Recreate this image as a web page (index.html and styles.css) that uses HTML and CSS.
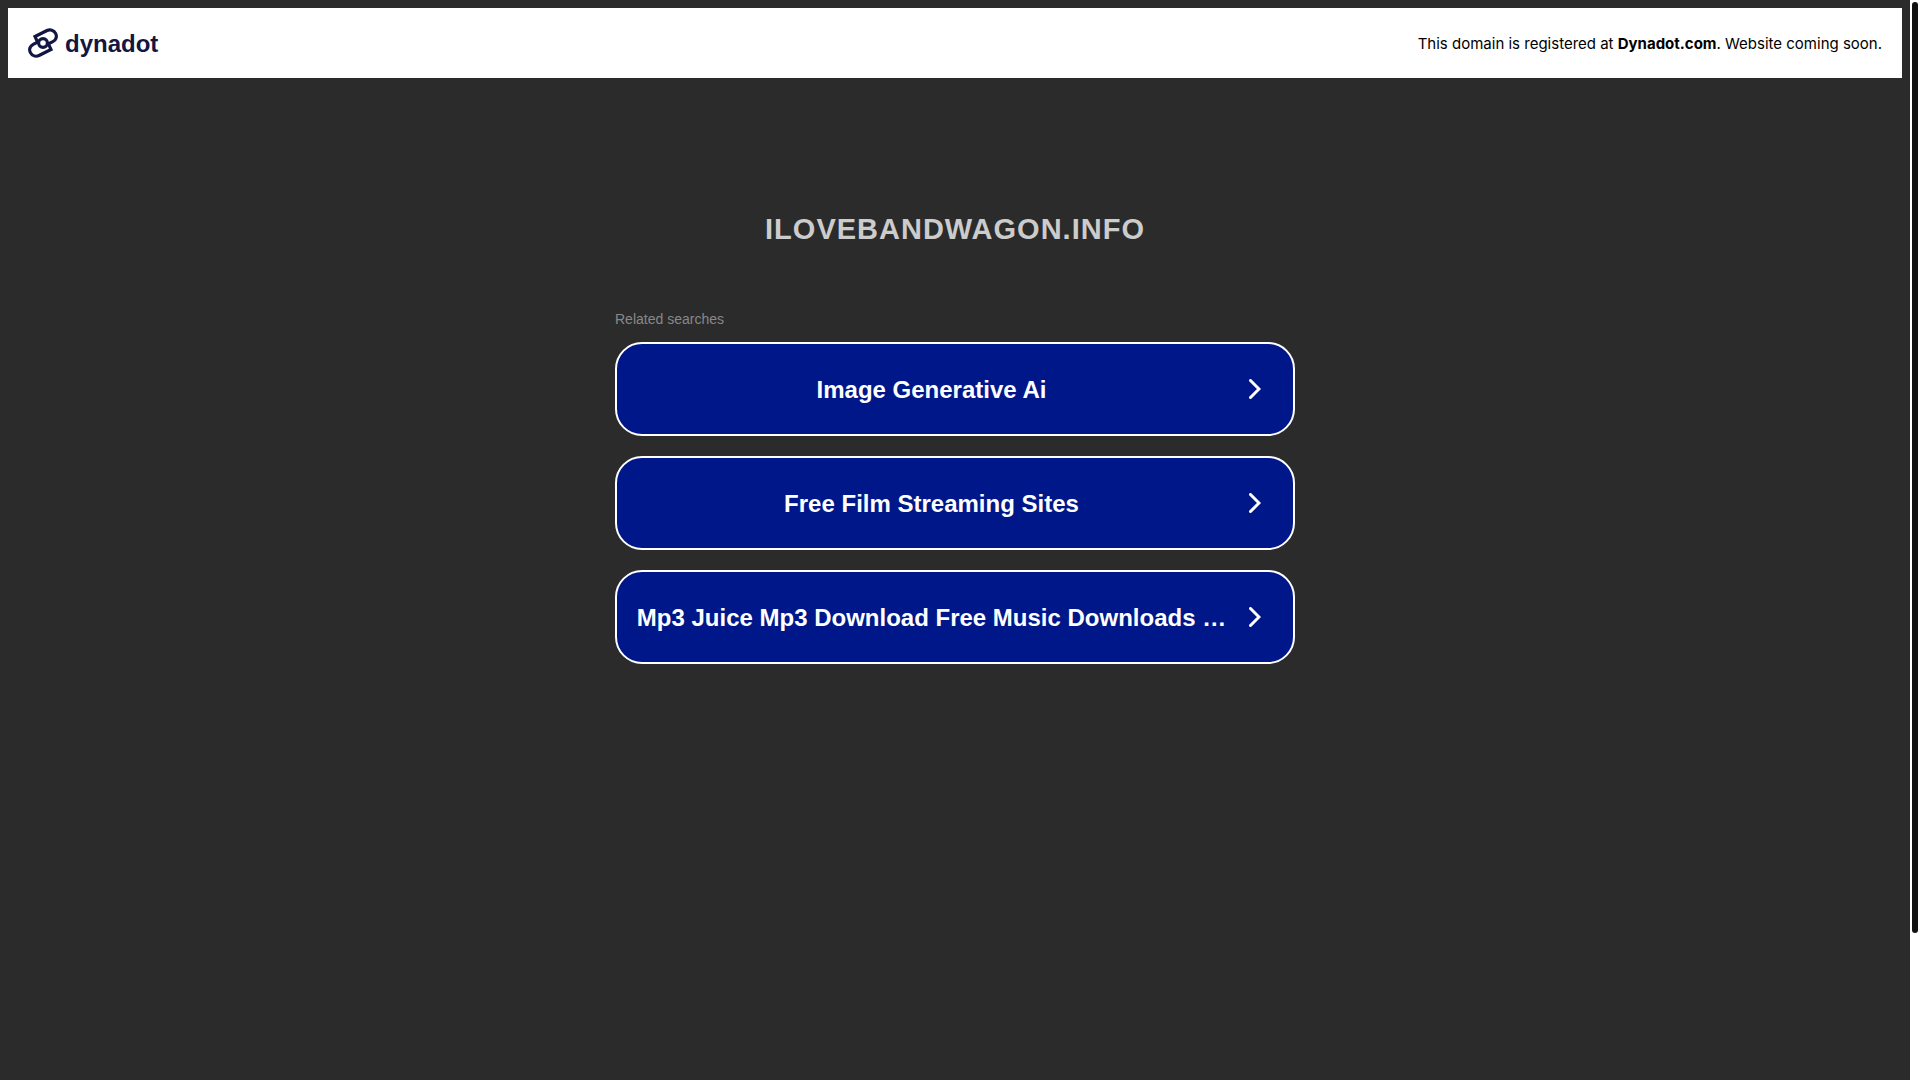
FILE: index.html
```
<!DOCTYPE html>
<html lang="en">
<head>
  <meta charset="UTF-8" />
  <meta name="viewport" content="width=device-width, initial-scale=1.0"/>
  <title>ilovebandwagon.info</title>
  <link rel="stylesheet" href="styles.css">
</head>
<body>

  <div class="page">
    <header class="banner">
      <a class="logo" href="#">
        <svg class="logo-icon" viewBox="0 0 30 30" fill="none" stroke="#131542" stroke-width="3.2" aria-hidden="true">
          <path d="M9.6 14.2 7 8.6 18.5 2.8C22.3 .9 26 2.2 27.6 5.4C29.2 8.6 28 12 24.8 13.7L18.6 16.8"/>
          <path d="M20.4 15.8 23 21.4 11.5 27.2C7.7 29.1 4 27.8 2.4 24.6C.8 21.4 2 18 5.2 16.3L11.4 13.2"/>
          <circle cx="15" cy="15" r="4.4"/>
        </svg>
        <span class="logo-text">dynadot</span>
      </a>
      <p class="notice">This domain is registered at <a href="#">Dynadot.com</a>. Website coming soon.</p>
    </header>

    <main class="content">
      <h1 class="domain">ilovebandwagon.info</h1>
      <p class="label">Related searches</p>
      <nav class="searches">
        <a class="search" href="#">
          <span class="search-text">Image Generative Ai</span>
          <svg class="arrow" viewBox="0 0 12 20" aria-hidden="true"><path d="M1.5 1.5 10 10 1.5 18.5"/></svg>
        </a>
        <a class="search" href="#">
          <span class="search-text">Free Film Streaming Sites</span>
          <svg class="arrow" viewBox="0 0 12 20" aria-hidden="true"><path d="M1.5 1.5 10 10 1.5 18.5"/></svg>
        </a>
        <a class="search" href="#">
          <span class="search-text">Mp3 Juice Mp3 Download Free Music Downloads …</span>
          <svg class="arrow" viewBox="0 0 12 20" aria-hidden="true"><path d="M1.5 1.5 10 10 1.5 18.5"/></svg>
        </a>
      </nav>
    </main>
  </div>

  <div class="scrollbar" aria-hidden="true">
    <div class="thumb"></div>
  </div>

</body>
</html>
```
FILE: styles.css
```
* {
  box-sizing: border-box;
}

body {
  margin: 0;
  display: flex;
  min-height: 100vh;
  background: #2b2b2b;
  font-family: "Liberation Sans", Arial, sans-serif;
}

a {
  color: inherit;
  text-decoration: none;
}

.page {
  flex: 1;
  min-width: 0;
  padding: 8px;
}

.banner {
  display: flex;
  align-items: center;
  justify-content: space-between;
  height: 70px;
  padding: 0 20px;
  background: #fff;
}

.logo {
  display: flex;
  align-items: center;
  gap: 7px;
  color: #131542;
}

.logo-icon {
  width: 30px;
  height: 30px;
}

.logo-text {
  padding-top: 2px;
  font-size: 24px;
  font-weight: bold;
  line-height: 30px;
}

.notice {
  margin: 0;
  font-family: Inter, "Liberation Sans", sans-serif;
  font-size: 15px;
  color: #000;
}

.notice a {
  font-weight: bold;
}

.content {
  width: 100%;
  max-width: 680px;
  margin: 0 auto;
  padding-top: 134px;
}

.domain {
  margin: 0;
  font-size: 29px;
  line-height: 34px;
  letter-spacing: 1px;
  text-align: center;
  text-transform: uppercase;
  color: #ccc;
}

.label {
  margin: 64px 0 14px;
  font-size: 14px;
  line-height: 18px;
  color: #888;
}

.searches {
  display: flex;
  flex-direction: column;
  gap: 20px;
}

.search {
  display: flex;
  align-items: center;
  height: 94px;
  padding: 0 32px 0 15px;
  border: 2px solid #fff;
  border-radius: 27px;
  background: #001789;
  color: #fff;
}

.search-text {
  flex: 1;
  min-width: 0;
  margin-right: 18px;
  padding-top: 2px;
  overflow: hidden;
  font-size: 24px;
  font-weight: bold;
  line-height: 32px;
  text-align: center;
  text-overflow: ellipsis;
  white-space: nowrap;
}

.arrow {
  flex: none;
  width: 12px;
  height: 20px;
  fill: none;
  stroke: #fff;
  stroke-width: 3;
  stroke-linecap: round;
}

.scrollbar {
  flex: none;
  width: 10px;
  height: 100vh;
  padding: 2px;
  background: #fff;
}

.thumb {
  height: 86.5%;
  border-radius: 3px;
  background: #111;
}
```
